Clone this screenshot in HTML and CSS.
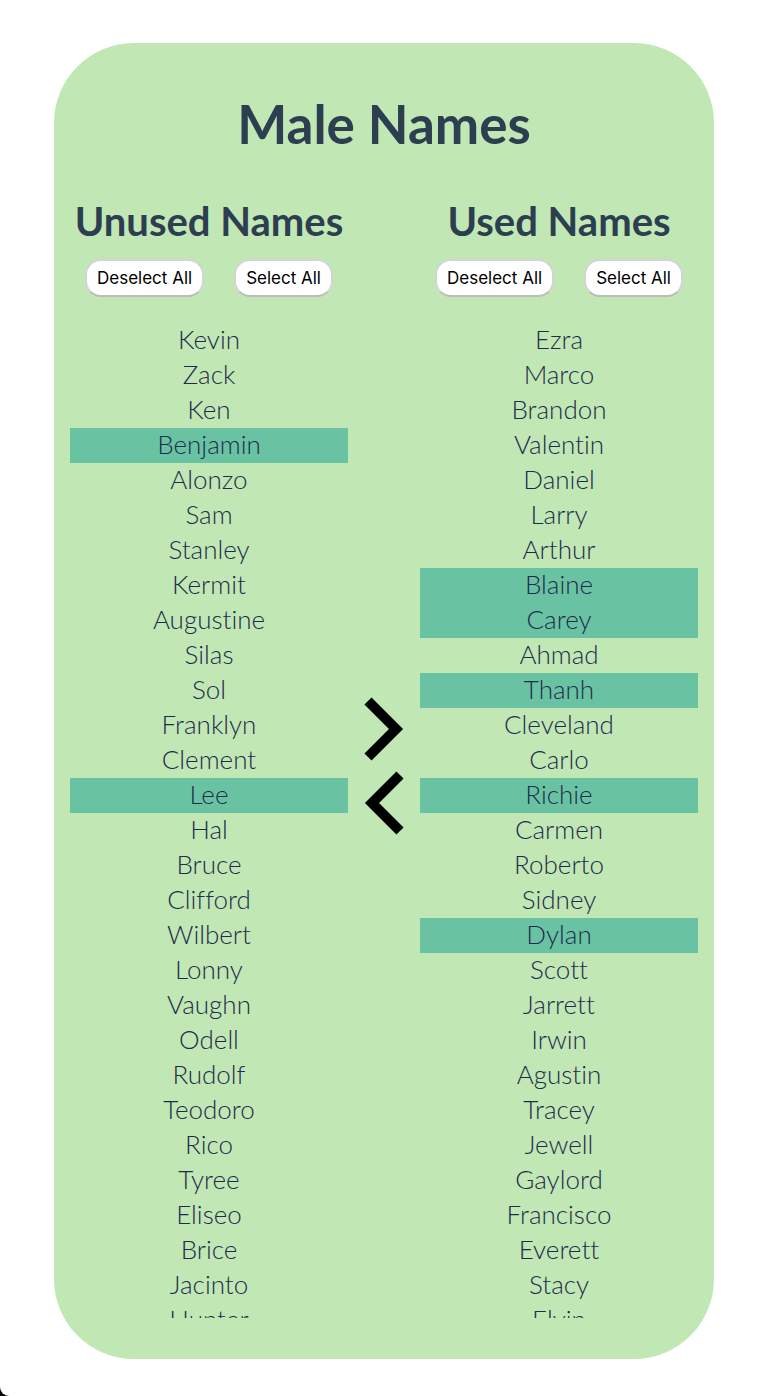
FILE: index.html
```html
<!DOCTYPE html>
<html lang="en">
<head>
<meta charset="utf-8">
<meta name="viewport" content="width=device-width, initial-scale=1">
<title>Male Names</title>
<link rel="stylesheet" href="styles.css">
</head>
<body>
<main class="card">
  <h1 class="title">Male Names</h1>
  <div class="columns">
    <section class="column" aria-labelledby="unused-heading">
      <h2 class="heading" id="unused-heading">Unused Names</h2>
      <div class="actions">
        <button class="action" type="button">Deselect All</button>
        <button class="action" type="button">Select All</button>
      </div>
      <ul class="names">
        <li>Kevin</li>
        <li>Zack</li>
        <li>Ken</li>
        <li class="selected">Benjamin</li>
        <li>Alonzo</li>
        <li>Sam</li>
        <li>Stanley</li>
        <li>Kermit</li>
        <li>Augustine</li>
        <li>Silas</li>
        <li>Sol</li>
        <li>Franklyn</li>
        <li>Clement</li>
        <li class="selected">Lee</li>
        <li>Hal</li>
        <li>Bruce</li>
        <li>Clifford</li>
        <li>Wilbert</li>
        <li>Lonny</li>
        <li>Vaughn</li>
        <li>Odell</li>
        <li>Rudolf</li>
        <li>Teodoro</li>
        <li>Rico</li>
        <li>Tyree</li>
        <li>Eliseo</li>
        <li>Brice</li>
        <li>Jacinto</li>
        <li>Hunter</li>
      </ul>
    </section>
    <div class="movers">
      <button class="mover" type="button" aria-label="Move to used names">
        <svg class="chevron" viewBox="0 0 40 64" aria-hidden="true"><path d="M4 4 32 32 4 60" fill="none" stroke="#000" stroke-width="10"/></svg>
      </button>
      <button class="mover" type="button" aria-label="Move to unused names">
        <svg class="chevron" viewBox="0 0 40 64" aria-hidden="true"><path d="M36 4 8 32 36 60" fill="none" stroke="#000" stroke-width="10"/></svg>
      </button>
    </div>
    <section class="column" aria-labelledby="used-heading">
      <h2 class="heading" id="used-heading">Used Names</h2>
      <div class="actions">
        <button class="action" type="button">Deselect All</button>
        <button class="action" type="button">Select All</button>
      </div>
      <ul class="names">
        <li>Ezra</li>
        <li>Marco</li>
        <li>Brandon</li>
        <li>Valentin</li>
        <li>Daniel</li>
        <li>Larry</li>
        <li>Arthur</li>
        <li class="selected">Blaine</li>
        <li class="selected">Carey</li>
        <li>Ahmad</li>
        <li class="selected">Thanh</li>
        <li>Cleveland</li>
        <li>Carlo</li>
        <li class="selected">Richie</li>
        <li>Carmen</li>
        <li>Roberto</li>
        <li>Sidney</li>
        <li class="selected">Dylan</li>
        <li>Scott</li>
        <li>Jarrett</li>
        <li>Irwin</li>
        <li>Agustin</li>
        <li>Tracey</li>
        <li>Jewell</li>
        <li>Gaylord</li>
        <li>Francisco</li>
        <li>Everett</li>
        <li>Stacy</li>
        <li>Elvin</li>
      </ul>
    </section>
  </div>
</main>
</body>
</html>
```
FILE: styles.css
```css
* {
  box-sizing: border-box;
}

html {
  background: #000;
}

body {
  display: flex;
  height: 100vh;
  margin: 0;
  padding: 43px 53px 37px 54px;
  background: #fff;
  border-bottom-left-radius: 9px;
  color: #2c3e50;
  font-family: Lato, "Liberation Sans", sans-serif;
}

.card {
  display: flex;
  flex: 1;
  flex-direction: column;
  min-width: 0;
  padding: 46px 16px 41px;
  background: #c1e7b5;
  border-radius: 80px;
}

.title {
  margin: 0 0 40px;
  font-size: 53px;
  font-weight: 700;
  line-height: 70px;
  text-align: center;
}

.columns {
  display: grid;
  flex: 1;
  grid-template-columns: minmax(0, 1fr) 72px minmax(0, 1fr);
  min-height: 0;
}

.column {
  display: flex;
  flex-direction: column;
  min-height: 0;
}

.heading {
  margin: 0;
  font-size: 40px;
  font-weight: 700;
  line-height: 44px;
  text-align: center;
  white-space: nowrap;
}

.actions {
  display: flex;
  justify-content: center;
  gap: 30px;
  margin: 16px 0 26px;
}

.action {
  height: 38px;
  padding: 0 10px;
  background: #fff;
  border: 2px solid #d4d4d4;
  border-bottom-color: #bcbcbc;
  border-radius: 16px;
  color: #000;
  font-family: Inter, "Liberation Sans", sans-serif;
  font-size: 17px;
  line-height: 34px;
  white-space: nowrap;
}

.names {
  flex: 1;
  min-height: 0;
  margin: 0;
  padding: 0;
  overflow: hidden;
  color: #1e2c4c;
  font-size: 26px;
  font-variant-ligatures: none;
  font-weight: 300;
  line-height: 33px;
  list-style: none;
  text-align: center;
}

.names li {
  padding-bottom: 2px;
}

.selected {
  background: #69c3a3;
}

.movers {
  display: flex;
  flex-direction: column;
  align-items: center;
  justify-content: center;
  gap: 10px;
  padding-top: 14px;
}

.mover {
  padding: 0;
  background: none;
  border: 0;
}

.chevron {
  display: block;
  width: 40px;
  height: 64px;
}
```
